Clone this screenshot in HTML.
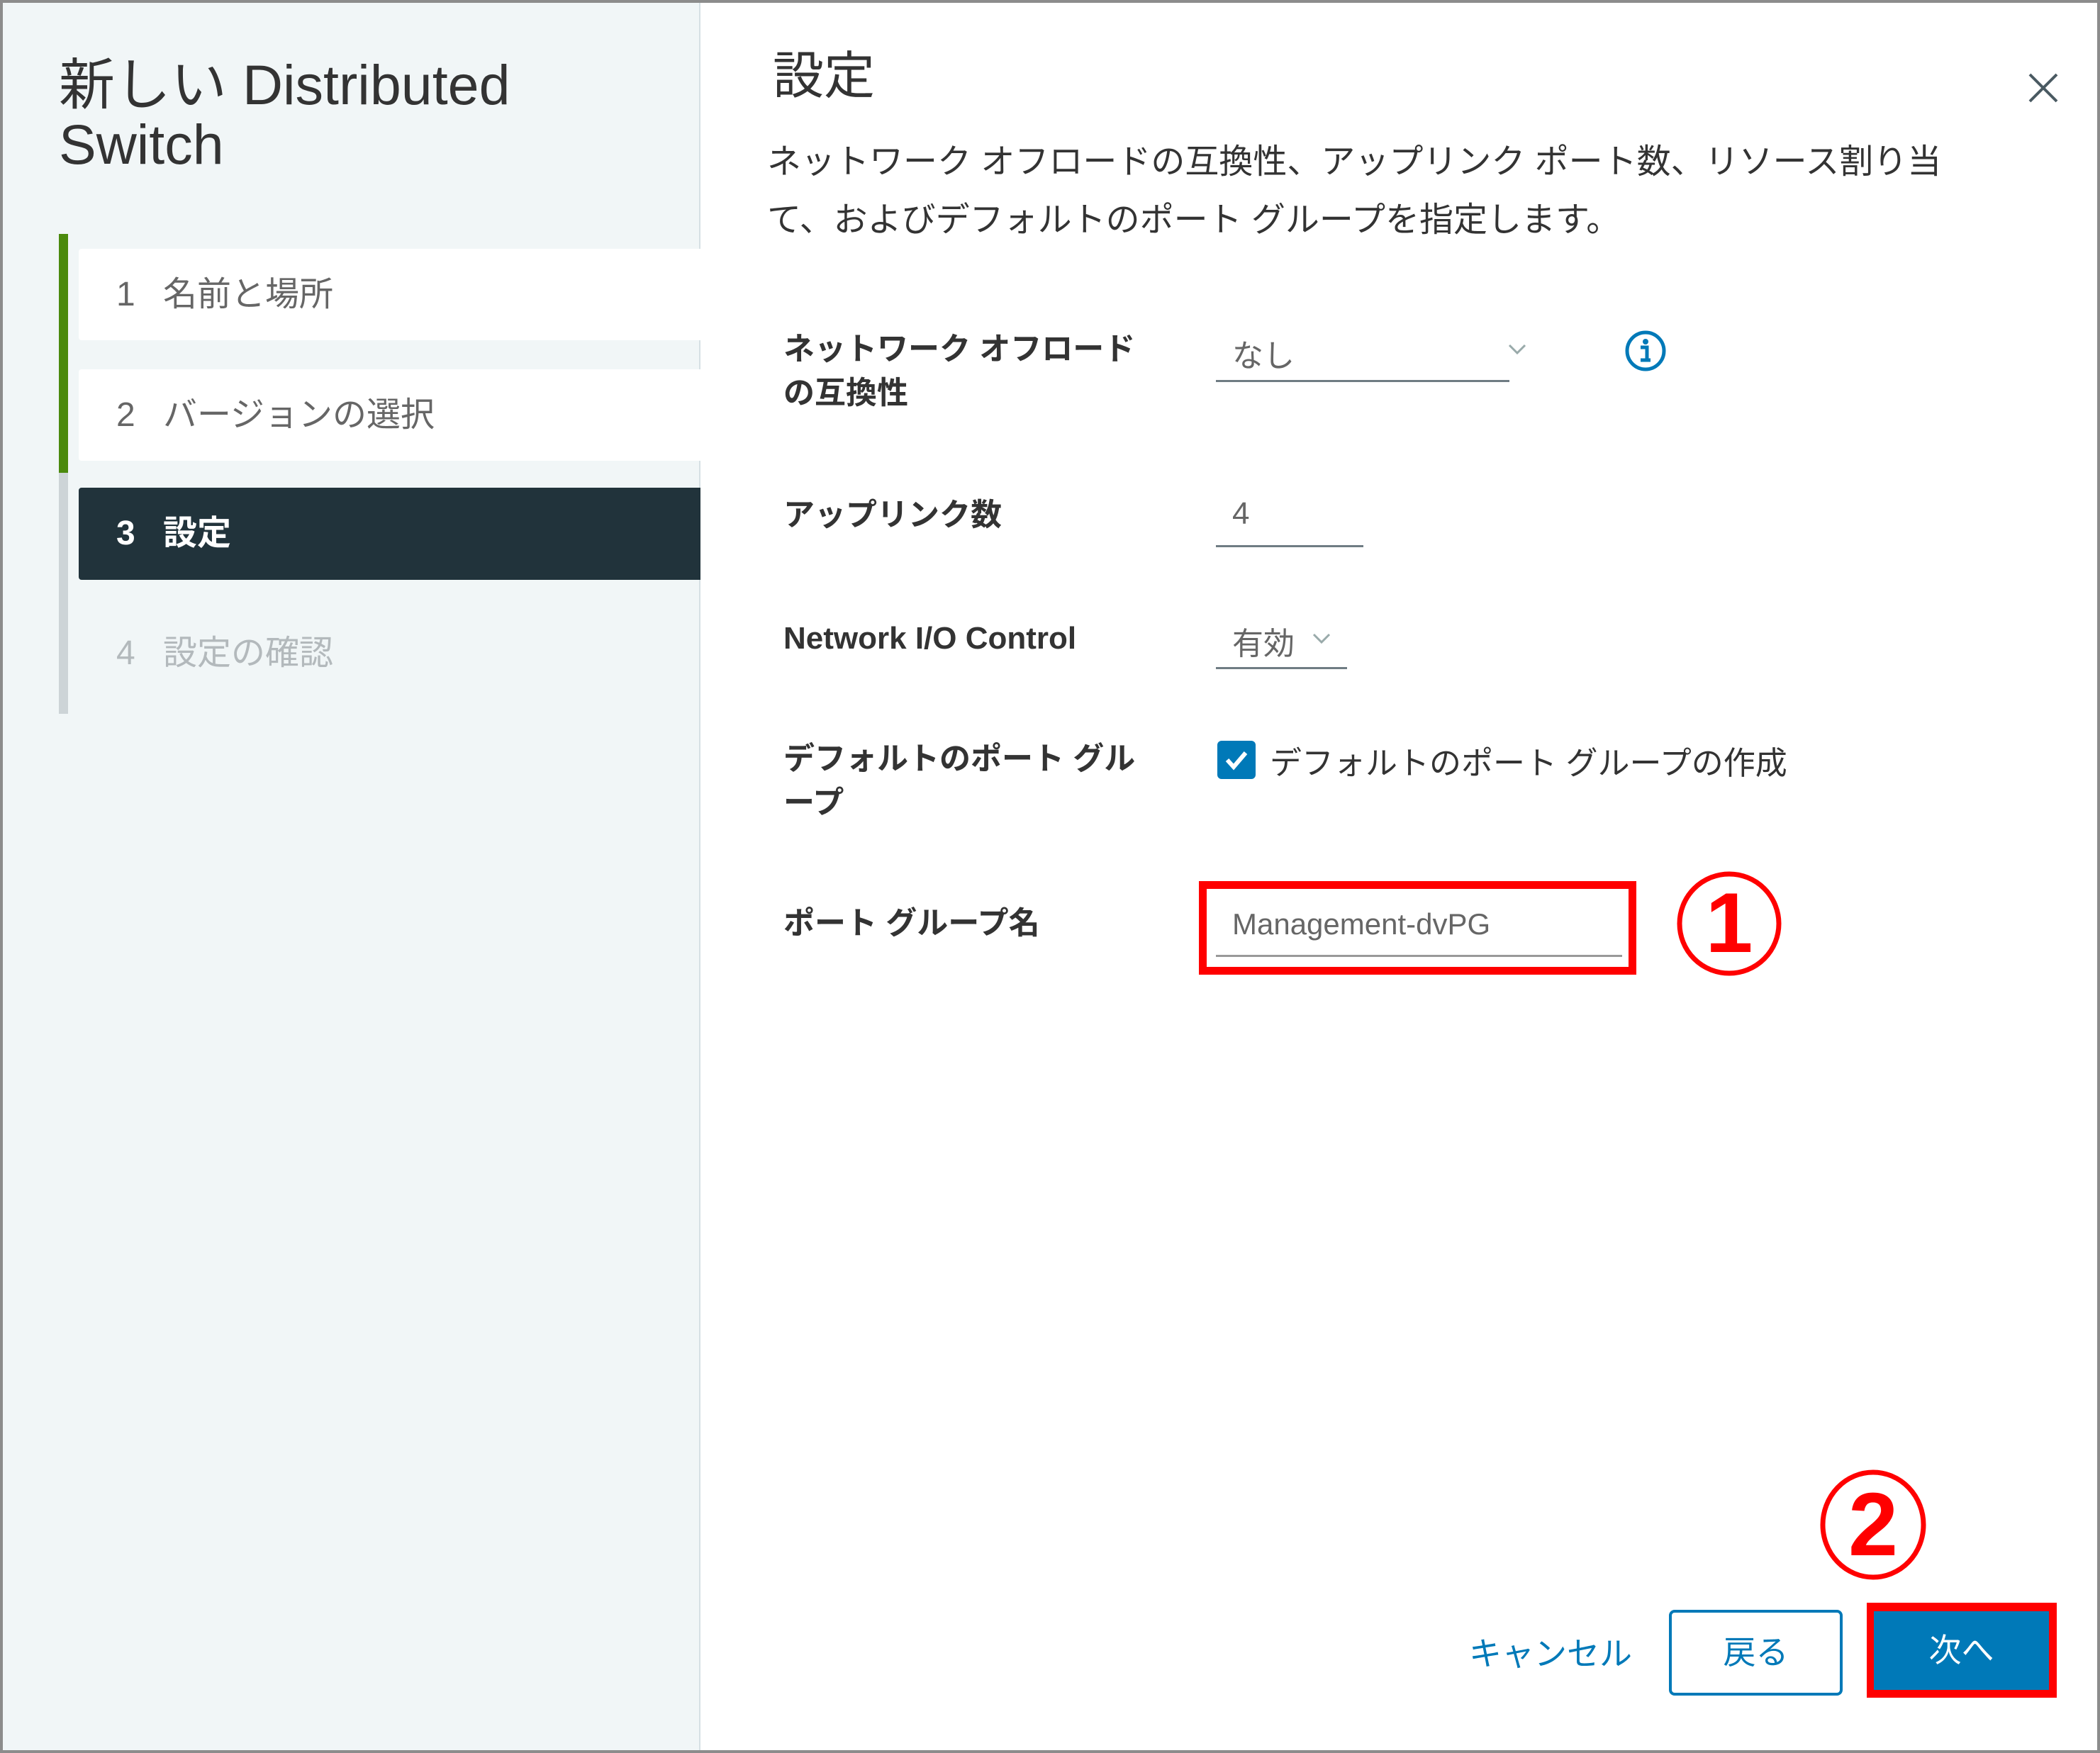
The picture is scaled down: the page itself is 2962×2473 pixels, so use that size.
<!DOCTYPE html>
<html><head><meta charset="utf-8"><style>
*{margin:0;padding:0;box-sizing:border-box}
body{width:2962px;height:2473px;position:relative;background:#fff;font-family:"Liberation Sans","Noto Sans CJK JP",sans-serif;color:#333;overflow:hidden}
.a{position:absolute;white-space:nowrap}
#frame{position:absolute;left:0;top:0;width:2962px;height:2473px;border:4px solid #8c8c8c}
#left{position:absolute;left:4px;top:4px;width:984px;height:2465px;background:#f1f6f7;border-right:2px solid #d6e0e4}
.step{position:absolute;left:111px;width:877px;height:129px;background:#fff;border-radius:4px 0 0 4px}
.step span{position:absolute;top:0;line-height:129px;font-size:48px;color:#666}
.lbl{position:absolute;font-size:44px;font-weight:bold;color:#333;white-space:nowrap;line-height:62px}
.val{position:absolute;font-size:44px;color:#666;white-space:nowrap}
.ul{position:absolute;height:3px;background:#6f7c83}
</style></head><body>
<div id="left"></div>
<div class="a" style="left:83px;top:78px;font-size:79px;line-height:84px;color:#333">新しい Distributed<br>Switch</div>
<div class="a" style="left:83px;top:330px;width:13px;height:337px;background:#4b8a0d"></div>
<div class="a" style="left:83px;top:667px;width:13px;height:340px;background:#cdd4d7"></div>
<div class="step" style="top:351px"><span style="left:53px">1</span><span style="left:119px">名前と場所</span></div>
<div class="step" style="top:521px"><span style="left:53px">2</span><span style="left:119px">バージョンの選択</span></div>
<div class="step" style="top:688px;height:130px;background:#21333b"><span style="left:53px;color:#fff;font-weight:bold;line-height:130px">3</span><span style="left:119px;color:#fff;font-weight:bold;line-height:130px">設定</span></div>
<div class="a" style="left:164px;top:892px;line-height:60px;font-size:48px;color:#b3b9bc">4</div>
<div class="a" style="left:230px;top:892px;line-height:60px;font-size:48px;color:#b3b9bc">設定の確認</div>

<div class="a" style="left:1090px;top:66px;font-size:72px;line-height:84px;color:#333">設定</div>
<svg class="a" style="left:2860px;top:102px" width="44" height="44" viewBox="0 0 44 44"><path d="M3 3L41 41M41 3L3 41" stroke="#4a5a62" stroke-width="4"/></svg>
<div class="a" style="left:1082px;top:188px;font-size:48px;line-height:82px;color:#333">ネットワーク オフロードの互換性、アップリンク ポート数、リソース割り当<br>て、およびデフォルトのポート グループを指定します。</div>

<div class="lbl" style="left:1105px;top:462px">ネットワーク オフロード<br>の互換性</div>
<div class="val" style="left:1738px;top:466px">なし</div>
<svg class="a" style="left:2126px;top:484px" width="28" height="18" viewBox="0 0 28 18"><path d="M3 3L14 14L25 3" fill="none" stroke="#9aa" stroke-width="3"/></svg>
<div class="ul" style="left:1715px;top:536px;width:414px"></div>
<svg class="a" style="left:2292px;top:466px" width="58" height="58" viewBox="0 0 58 58"><circle cx="29" cy="29" r="26" fill="none" stroke="#0079b8" stroke-width="5"/><circle cx="29" cy="16" r="4" fill="#0079b8"/><path d="M22 24H31V42M22 42H36" fill="none" stroke="#0079b8" stroke-width="5"/></svg>

<div class="lbl" style="left:1105px;top:696px">アップリンク数</div>
<div class="val" style="left:1738px;top:700px">4</div>
<div class="ul" style="left:1715px;top:769px;width:208px"></div>

<div class="lbl" style="left:1105px;top:870px">Network I/O Control</div>
<div class="val" style="left:1738px;top:872px">有効</div>
<svg class="a" style="left:1850px;top:892px" width="28" height="18" viewBox="0 0 28 18"><path d="M3 3L14 14L25 3" fill="none" stroke="#9aa" stroke-width="3"/></svg>
<div class="ul" style="left:1715px;top:941px;width:185px"></div>

<div class="lbl" style="left:1105px;top:1040px">デフォルトのポート グル<br>ープ</div>
<div class="a" style="left:1717px;top:1045px;width:54px;height:54px;background:#0079b8;border-radius:6px"></div>
<svg class="a" style="left:1717px;top:1045px" width="54" height="54" viewBox="0 0 54 54"><path d="M14 27L23 37L40 17" fill="none" stroke="#fff" stroke-width="6"/></svg>
<div class="val" style="left:1791px;top:1040px;color:#333;font-size:45px">デフォルトのポート グループの作成</div>

<div class="lbl" style="left:1105px;top:1272px">ポート グループ名</div>
<div class="val" style="left:1738px;top:1280px;font-size:42px">Management-dvPG</div>
<div class="ul" style="left:1715px;top:1347px;width:573px;background:#999"></div>
<div class="a" style="left:1691px;top:1243px;width:617px;height:132px;border:11px solid #f00"></div>
<svg class="a" style="left:2364px;top:1228px" width="150" height="150" viewBox="0 0 150 150"><ellipse cx="75" cy="75" rx="70" ry="70" fill="none" stroke="#f00" stroke-width="7"/><text x="75" y="115" text-anchor="middle" font-family="Liberation Sans" font-weight="bold" font-size="120" fill="#f00">1</text></svg>

<svg class="a" style="left:2566px;top:2072px" width="152" height="158" viewBox="0 0 152 158"><ellipse cx="76" cy="79" rx="71" ry="74" fill="none" stroke="#f00" stroke-width="7"/><text x="76" y="122" text-anchor="middle" font-family="Liberation Sans" font-weight="bold" font-size="126" fill="#f00">2</text></svg>

<div class="a" style="left:2072px;top:2303px;font-size:46px;line-height:60px;color:#0079b8">キャンセル</div>
<div class="a" style="left:2354px;top:2271px;width:245px;height:121px;border:4px solid #0079b8;border-radius:8px;text-align:center;line-height:113px;font-size:46px;color:#0079b8">戻る</div>
<div class="a" style="left:2633px;top:2261px;width:268px;height:134px;background:#f00"></div>
<div class="a" style="left:2643px;top:2273px;width:247px;height:111px;background:#0079b8;text-align:center;line-height:111px;font-size:46px;color:#fff">次へ</div>
<div id="frame"></div>
</body></html>
